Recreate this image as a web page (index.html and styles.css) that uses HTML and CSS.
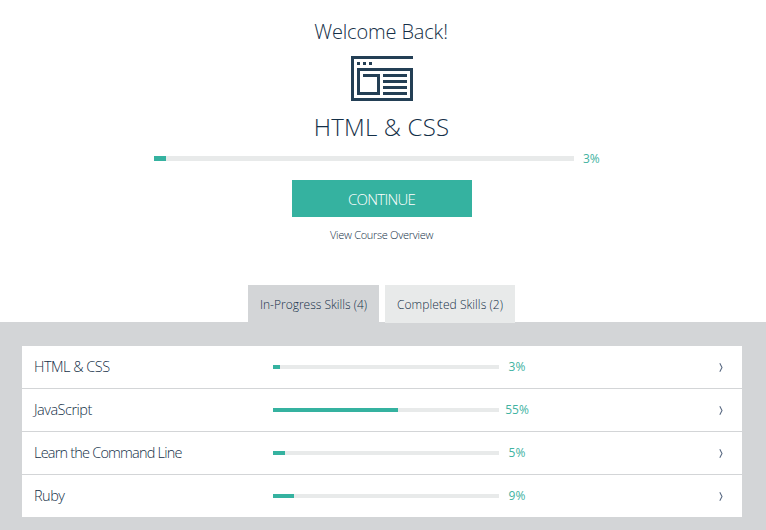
FILE: index.html
```html
<!DOCTYPE html>
<html lang="en">
<head>
<meta charset="utf-8">
<title>Skills</title>
<link rel="stylesheet" href="styles.css">
</head>
<body>
<section class="hero">
  <h1 class="welcome"><span>Welcome Back!</span></h1>
  <svg class="course-icon" width="62" height="45" viewBox="0 0 62 45" shape-rendering="crispEdges" aria-hidden="true">
    <path d="M0 0H62V3H3V42H59V15H9V36H26V21H12V18H29V39H6V12H62V45H0Z"/>
    <path d="M6 6h3v3H6zM12 6h3v3h-3zM18 6h3v3h-3zM32 18h24v3H32zM32 24h24v3H32zM32 30h24v3H32zM32 36h24v3H32z"/>
  </svg>
  <h2 class="course"><span>HTML &amp; CSS</span></h2>
  <div class="overall">
    <div class="bar"><div class="fill" style="width:12px"></div></div>
    <span class="percent">3%</span>
  </div>
  <a class="continue"><span>CONTINUE</span></a>
  <a class="overview"><span>View Course Overview</span></a>
</section>
<nav class="tabs">
  <a class="tab active"><span>In-Progress Skills (4)</span></a>
  <a class="tab other"><span>Completed Skills (2)</span></a>
</nav>
<main class="panel">
  <ul class="skills">
    <li class="skill"><span class="name n1">HTML &amp; CSS</span><div class="bar"><div class="fill" style="width:7px"></div></div><span class="percent">3%</span><svg class="arrow" width="4" height="9" viewBox="0 0 4 9"><path d="M.8.3 3 4.500.8 8.700"/></svg></li>
    <li class="skill"><span class="name n2">JavaScript</span><div class="bar"><div class="fill" style="width:125px"></div></div><span class="percent">55%</span><svg class="arrow" width="4" height="9" viewBox="0 0 4 9"><path d="M.8.3 3 4.500.8 8.700"/></svg></li>
    <li class="skill"><span class="name n3">Learn the Command Line</span><div class="bar"><div class="fill" style="width:12px"></div></div><span class="percent">5%</span><svg class="arrow" width="4" height="9" viewBox="0 0 4 9"><path d="M.8.3 3 4.500.8 8.700"/></svg></li>
    <li class="skill"><span class="name n4">Ruby</span><div class="bar"><div class="fill" style="width:21px"></div></div><span class="percent">9%</span><svg class="arrow" width="4" height="9" viewBox="0 0 4 9"><path d="M.8.3 3 4.500.8 8.700"/></svg></li>
  </ul>
</main>
</body>
</html>
```
FILE: styles.css
```css
* { box-sizing: border-box; }
body {
  margin: 0;
  height: 530px;
  overflow: hidden;
  background: #fff;
  color: #142f47;
  font-family: "Open Sans", "Liberation Sans", sans-serif;
  font-weight: 300;
  white-space: nowrap;
}
.hero {
  height: 285px;
  padding-top: 16px;
  display: flex;
  flex-direction: column;
  align-items: center;
  padding-right: 2px;
}
.welcome { margin: 0 2px 0 0; height: 40px; font-size: 20px; line-height: 31px; font-weight: 300; letter-spacing: -0.15px; }
.course-icon { display: block; fill: #233f55; flex: none; }
.course { margin: 8px 1px 0 0; height: 47px; font-size: 24px; line-height: 35px; font-weight: 300; letter-spacing: 0.2px; }
.overall { display: flex; align-items: center; height: 5px; width: 456px; gap: 9px; }
.bar { background: #e8eaea; }
.fill { height: 100%; background: #35b2a0; }
.overall .bar { width: 420px; height: 5px; flex: none; }
.percent { color: #42b3a2; font-size: 12px; line-height: 16px; font-weight: 400; }
.continue {
  margin-top: 19px;
  width: 180px;
  height: 37px;
  padding-right: 1px;
  background: #35b2a0;
  color: #fff;
  font-size: 15px;
  line-height: 38px;
  text-align: center;
  letter-spacing: -0.75px;
}
.overview { margin: 10px 1px 0 0; font-size: 11px; line-height: 16px; letter-spacing: -0.3px; }
.tabs { display: flex; gap: 6px; height: 37px; margin-left: 248px; }
.tab { height: 37px; font-size: 12px; line-height: 39px; padding-left: 12px; position: relative; }
.active { width: 131px; background: #d3d5d7; }
.other { width: 130px; height: 38px; background: #e8eaea; z-index: 1; letter-spacing: 0.05px; }
.panel { height: 208px; padding: 24px 24px 0 22px; background: #d3d5d7; }
.skills { list-style: none; margin: 0; padding: 0; }
.skill {
  display: grid;
  grid-template-columns: 239px 226px 36px 1fr;
  align-items: center;
  height: 43px;
  padding: 0 19px 0 12px;
  background: #fff;
  border-bottom: 1px solid #d3d5d7;
}
.skill:last-child { height: 42px; border-bottom: 0; }
.skill .bar { height: 4px; }
.name { font-size: 14.5px; line-height: 20px; letter-spacing: -0.5px; }
.n1 { letter-spacing: -0.5px; }
.n3 { letter-spacing: -0.8px; }
.skill .percent { text-align: center; }
.arrow { justify-self: end; fill: none; stroke: #5b6b84; stroke-width: 1.1; }
```
